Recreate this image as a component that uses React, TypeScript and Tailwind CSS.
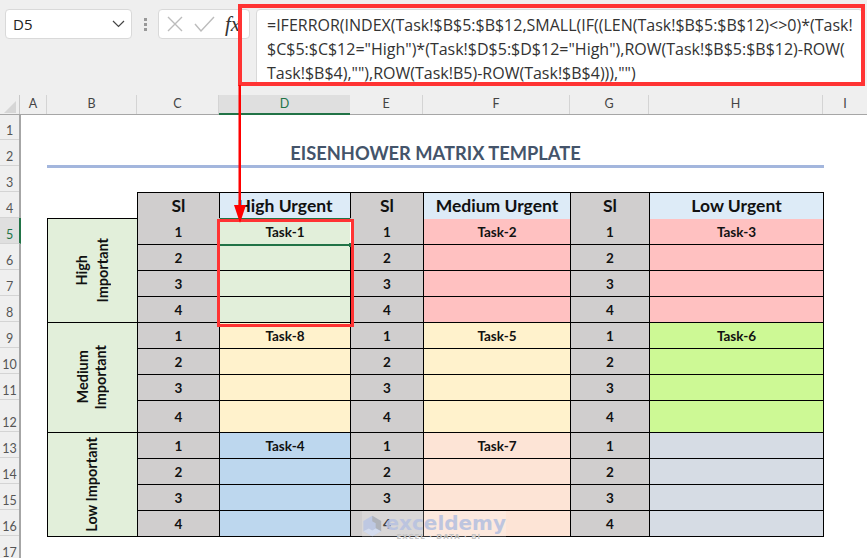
const columns = [
  { name: "B", w: "w-[90px]" },
  { name: "C", w: "w-[82px]" },
  { name: "D", w: "w-[131px]", active: true },
  { name: "E", w: "w-[73px]" },
  { name: "F", w: "w-[147px]" },
  { name: "G", w: "w-[79px]" },
  { name: "H", w: "w-[174px]" },
];

const rowHeaders = [
  { n: 1, h: "h-[25px]" },
  { n: 2, h: "h-[26px]" },
  { n: 3, h: "h-[26px]" },
  { n: 4, h: "h-[26px]" },
  { n: 5, h: "h-[26px]", active: true },
  { n: 6, h: "h-[26px]" },
  { n: 7, h: "h-[26px]" },
  { n: 8, h: "h-[26px]" },
  { n: 9, h: "h-[26px]" },
  { n: 10, h: "h-[26px]" },
  { n: 11, h: "h-[26px]" },
  { n: 12, h: "h-[32px]" },
  { n: 13, h: "h-[26px]" },
  { n: 14, h: "h-[26px]" },
  { n: 15, h: "h-[26px]" },
  { n: 16, h: "h-[26px]" },
  { n: 17, h: "h-[26px]" },
];

const groups = [
  {
    label: ["High", "Important"],
    leading: "leading-[21px]",
    fills: ["bg-[#e2efda]", "bg-[#ffc1c1]", "bg-[#ffc1c1]"],
    tasks: ["Task-1", "Task-2", "Task-3"],
  },
  {
    label: ["Medium", "Important"],
    leading: "leading-[18px]",
    fills: ["bg-[#fff2cc]", "bg-[#fff2cc]", "bg-[#cdf995]"],
    tasks: ["Task-8", "Task-5", "Task-6"],
  },
  {
    label: ["Low Important"],
    leading: "leading-[18px]",
    fills: ["bg-[#bdd7ee]", "bg-[#fde4d6]", "bg-[#d6dce4]"],
    tasks: ["Task-4", "Task-7", ""],
  },
];

function Cell({ className, children }: { className?: string; children?: React.ReactNode }) {
  return (
    <div className={`flex items-center justify-center pt-px text-[13.5px] font-bold text-[#111] ${className ?? ""}`}>
      {children}
    </div>
  );
}

function Header({ text, fill }: { text: string; fill: string }) {
  return (
    <div className={`flex items-center justify-center text-[17.5px] font-bold text-[#111] ${fill}`}>{text}</div>
  );
}

function Group({ group }: { group: (typeof groups)[number] }) {
  return (
    <>
      <div
        className={`row-span-4 flex items-center justify-center bg-[#e2efda] pr-[2px] text-[14.5px] font-bold text-[#111] ${group.leading}`}
      >
        <div className="rotate-180 text-center whitespace-nowrap [writing-mode:vertical-rl]">
          {group.label.map((l) => (
            <div key={l}>{l}</div>
          ))}
        </div>
      </div>
      {[0, 1, 2, 3].flatMap((i) =>
        [0, 1, 2].flatMap((c) => [
          <Cell key={`s${i}${c}`} className="bg-[#d0cece]">
            {i + 1}
          </Cell>,
          <Cell key={`t${i}${c}`} className={group.fills[c]}>
            {i === 0 ? group.tasks[c] : ""}
          </Cell>,
        ])
      )}
    </>
  );
}

export default function App() {
  return (
    <div className="relative flex h-[558px] w-[867px] flex-col overflow-hidden bg-[#efefef] font-['Lato',sans-serif]">
      {/* Formula bar */}
      <div className="flex h-[95px] shrink-0 items-start pt-[9px] pl-[5px]">
        <div className="flex h-[30px] w-[127px] items-center justify-between rounded-[4px] border border-[#d9d9d9] bg-white pr-[6px] pl-[7px] font-['Open_Sans',sans-serif] text-[15px] text-[#222]">
          D5
          <svg width="13" height="8" viewBox="0 0 13 8" fill="none" stroke="#444" strokeWidth="1.2">
            <path d="M1 1l5.500 5.500L12 1" />
          </svg>
        </div>
        <div className="ml-[12px] flex h-[30px] w-[3px] flex-col justify-center gap-[2px]">
          <span className="h-[3px] w-[3px] bg-[#999]" />
          <span className="h-[3px] w-[3px] bg-[#999]" />
          <span className="h-[3px] w-[3px] bg-[#999]" />
        </div>
        <div className="ml-[11px] flex h-[30px] w-[92px] items-center rounded-[4px] border border-[#d9d9d9] bg-white pl-[8px]">
          <svg width="16" height="16" viewBox="0 0 16 16" fill="none" stroke="#bcbcbc" strokeWidth="1.4">
            <path d="M1 1l14 14M15 1L1 15" />
          </svg>
          <svg className="ml-[11px]" width="21" height="16" viewBox="0 0 21 16" fill="none" stroke="#bcbcbc" strokeWidth="1.4">
            <path d="M1 8l6 7L20 1" />
          </svg>
          <span className="ml-[10px] font-['Liberation_Serif',serif] text-[21px] leading-none text-[#333] italic">fx</span>
        </div>
        <div className="ml-[6px] h-[77px] w-[607px] rounded-[4px] border border-[#d9d9d9] bg-white pt-[3px] pl-[10px] font-['Open_Sans',sans-serif] text-[16px] leading-[24px] whitespace-nowrap text-[#333]">
          <div>=IFERROR(INDEX(Task!$B$5:$B$12,SMALL(IF((LEN(Task!$B$5:$B$12)&lt;&gt;0)*(Task!</div>
          <div>$C$5:$C$12="High")*(Task!$D$5:$D$12="High"),ROW(Task!$B$5:$B$12)-ROW(</div>
          <div>Task!$B$4),""),ROW(Task!B5)-ROW(Task!$B$4))),"")</div>
        </div>
      </div>

      {/* Column headers */}
      <div className="flex h-[20px] shrink-0 border-b border-[#a6a6a6] text-[12.5px] text-[#444]">
        <div className="flex w-[20px] items-end justify-end border-r border-[#c8c8c8] pr-[3px] pb-[1px]">
          <div className="h-0 w-0 border-b-[12px] border-l-[12px] border-b-[#d6d6d6] border-l-transparent" />
        </div>
        <div className="flex w-[27px] items-center justify-center border-r border-[#d4d4d4]">A</div>
        {columns.map((c) => (
          <div
            key={c.name}
            className={`flex items-center justify-center ${c.w} ${
              c.active
                ? "h-[20px] border-b-2 border-[#217346] bg-[#dfdfdf] text-[#217346]"
                : "border-r border-[#d4d4d4]"
            }`}
          >
            {c.name}
          </div>
        ))}
        <div className="flex flex-1 items-center justify-center">I</div>
      </div>

      {/* Sheet */}
      <div className="flex min-h-0 flex-1">
        <div className="w-[21px] shrink-0 border-r-2 border-[#a6a6a6] text-[12.5px] leading-[14px] text-[#555]">
          {rowHeaders.map((r) => (
            <div
              key={r.n}
              className={`flex items-end justify-center border-b border-[#d4d4d4] pb-[1px] ${r.h} ${
                r.active ? "-mr-[2px] border-r-2 border-r-[#217346] bg-[#dfdfdf] text-[#217346]" : ""
              }`}
            >
              {r.n}
            </div>
          ))}
        </div>
        <div className="flex-1 bg-white pl-[26px]">
          <div className="mt-[25px] flex h-[28px] w-[777px] items-center justify-center border-b-[3px] border-[#a3b6dd] pt-[2px] text-[18.300px] font-bold text-[#44546a]">
            EISENHOWER MATRIX TEMPLATE
          </div>
          <div className="mt-[24px] w-[777px]">
            <div className="-mb-px ml-[90px] grid h-[27px] grid-cols-[81px_130px_72px_146px_78px_173px] gap-px bg-black p-px">
              <Header text="Sl" fill="bg-[#d0cece]" />
              <Header text="High Urgent" fill="bg-[#ddebf7]" />
              <Header text="Sl" fill="bg-[#d0cece]" />
              <Header text="Medium Urgent" fill="bg-[#ddebf7]" />
              <Header text="Sl" fill="bg-[#d0cece]" />
              <Header text="Low Urgent" fill="bg-[#ddebf7]" />
            </div>
            <div className="grid grid-cols-[89px_81px_130px_72px_146px_78px_173px] grid-rows-[repeat(7,25px)_31px_repeat(4,25px)] gap-px bg-black p-px">
              {groups.map((g) => (
                <Group key={g.label.join(" ")} group={g} />
              ))}
            </div>
          </div>
        </div>
      </div>

      {/* Selected cell D5 */}
      <div className="absolute top-[218px] left-[219px] h-[28px] w-[132px] border-x border-t border-x-white border-t-[#217346] border-b-2 border-b-[#217346]" />
      <div className="absolute top-[243px] left-[349px] h-[4px] w-[4px] bg-[#217346]" />

      {/* Red callouts */}
      <div className="absolute top-[4px] left-[238px] h-[82px] w-[627px] border-[4px] border-[#ff3333]" />
      <div className="absolute top-[219px] left-[217px] h-[108px] w-[137px] border-[3px] border-[#ff3333]" />
      <svg className="absolute top-[85px] left-[230px]" width="20" height="140" viewBox="0 0 20 140" fill="#ff0000">
        <rect x="8.500" y="0" width="2.500" height="122" />
        <path d="M4 120h12l-6 18z" />
      </svg>

      {/* Watermark */}
      <div className="absolute top-[511px] left-[362px] flex h-[32px] w-[144px] bg-white/20">
        <svg className="mt-[-1px]" width="30" height="32" viewBox="0 0 30 32">
          <path d="M15 1l13 7.500v15L15 31 2 23.500v-15z" fill="#b4c3e6" fillOpacity="0.75" />
          <path d="M15 1l13 7.500v15l-8-4.500v-7l-5-3z" fill="#a9a9a9" fillOpacity="0.7" />
          <path d="M15 31L2 23.500l8-4 5 3 5-3 8 4z" fill="#dbe3f2" fillOpacity="0.75" />
        </svg>
        <div className="ml-[3px] font-['DejaVu_Sans',sans-serif] text-[#b8c2e0]">
          <div className="text-[20px] leading-[24px] font-bold opacity-90">exceldemy</div>
          <div className="-mt-[2px] pl-[11px] text-[7px] leading-[9px] font-bold tracking-[1px] text-[#c4c4c4]">
            EXCEL · DATA · BI
          </div>
        </div>
      </div>
    </div>
  );
}
